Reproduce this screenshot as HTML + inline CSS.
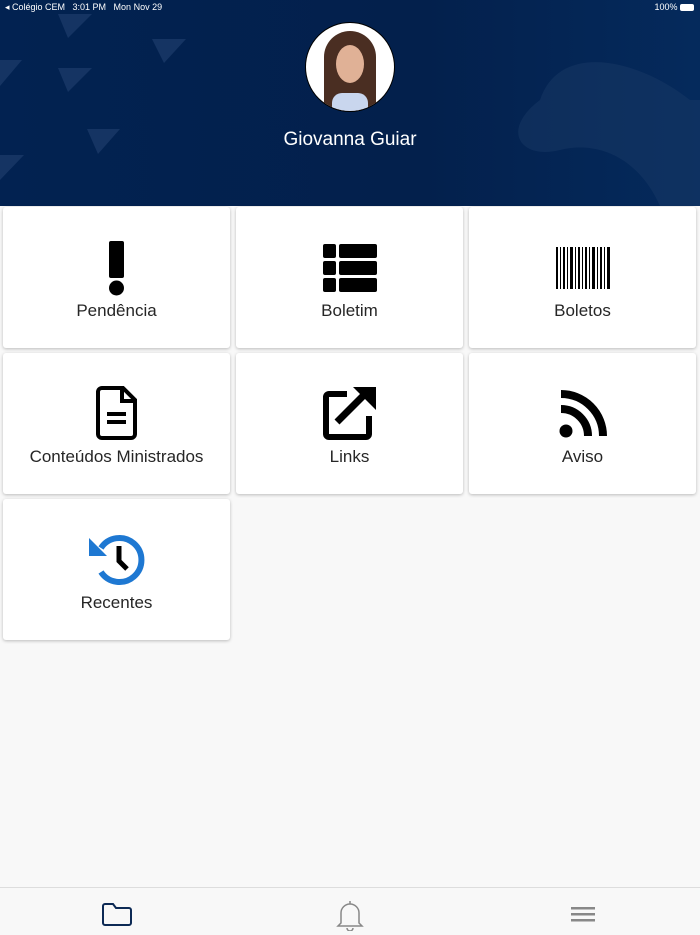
<!DOCTYPE html>
<html><head><meta charset="utf-8"><style>
body{margin:0;width:700px;height:934px;background:#f8f8f8;font-family:"Liberation Sans",Roboto,sans-serif;position:relative;overflow:hidden}
.hdr{position:absolute;left:0;top:0;width:700px;height:206px;background:linear-gradient(90deg,#022251,#03204c 60%,#052a5c);overflow:hidden}
.sb{position:absolute;top:2px;font-size:9px;color:#fff}
.name{position:absolute;top:129px;width:700px;text-align:center;color:#fff;font-size:19px}
.card{position:absolute;width:227px;height:141px;background:#fff;border-radius:3px;box-shadow:0 1px 3px rgba(0,0,0,.25)}
.card svg{position:absolute;left:50%;transform:translateX(-50%);top:34px}
.card .t{position:absolute;top:94px;width:100%;text-align:center;font-size:17px;color:#262626}
.tab{position:absolute;top:887px;left:0;width:700px;height:47px;background:#f8f8f8;border-top:1px solid #ddd}
</style></head><body>
<div class="hdr">
<svg width="700" height="206" style="position:absolute;left:0;top:0">
<g fill="#1b3a68" opacity=".8">
<polygon points="58,14 92,14 68,38"/><polygon points="152,39 186,39 164,63"/><polygon points="0,60 22,60 0,86"/><polygon points="58,68 92,68 68,92"/><polygon points="87,129 120,129 98,154"/><polygon points="0,155 24,155 0,180"/>
<path d="M540,100 C560,40 640,60 690,100 L700,100 L700,206 L660,206 C640,160 600,140 560,150 C520,160 500,130 540,100Z" opacity=".6"/>
</g></svg>
<div class="sb" style="left:5px">◂ Colégio CEM&nbsp;&nbsp;&nbsp;3:01 PM&nbsp;&nbsp;&nbsp;Mon Nov 29</div>
<div class="sb" style="right:6px">100% <span style="display:inline-block;width:14px;height:7px;background:#fff;border-radius:2px;vertical-align:-1px"></span></div>
<div style="position:absolute;left:305px;top:22px;width:88px;height:88px;border-radius:50%;background:#fff;border:1px solid #000;overflow:hidden">
<div style="position:absolute;left:18px;top:8px;width:52px;height:90px;background:#4a2e22;border-radius:26px 26px 10px 10px"></div>
<div style="position:absolute;left:30px;top:22px;width:28px;height:38px;background:#e0b196;border-radius:50%"></div>
<div style="position:absolute;left:26px;top:70px;width:36px;height:30px;background:#c9d6ee;border-radius:10px 10px 0 0"></div>
</div>
</div>
<div class="name">Giovanna Guiar</div>

<div class="card" style="left:3px;top:207px"><svg width="20" height="56" viewBox="0 0 20 56"><rect x="2" y="0" width="15" height="37" rx="2"/><circle cx="9.5" cy="47" r="7.5"/></svg><div class="t">Pendência</div></div>
<div class="card" style="left:236px;top:207px"><svg width="54" height="48" viewBox="0 0 54 48" style="top:37px"><rect x="0" y="0" width="13" height="14" rx="2"/><rect x="16" y="0" width="38" height="14" rx="2"/><rect x="0" y="17" width="13" height="14" rx="2"/><rect x="16" y="17" width="38" height="14" rx="2"/><rect x="0" y="34" width="13" height="14" rx="2"/><rect x="16" y="34" width="38" height="14" rx="2"/></svg><div class="t">Boletim</div></div>
<div class="card" style="left:469px;top:207px"><svg width="54" height="42" viewBox="0 0 54 42" style="top:40px"><g fill="#000"><rect x="0" width="2" height="42"/><rect x="4" width="1" height="42"/><rect x="7" width="2" height="42"/><rect x="11" width="1" height="42"/><rect x="14" width="3" height="42"/><rect x="19" width="1" height="42"/><rect x="22" width="2" height="42"/><rect x="26" width="1" height="42"/><rect x="29" width="2" height="42"/><rect x="33" width="1" height="42"/><rect x="36" width="3" height="42"/><rect x="41" width="1" height="42"/><rect x="44" width="2" height="42"/><rect x="48" width="1" height="42"/><rect x="51" width="3" height="42"/></g></svg><div class="t">Boletos</div></div>

<div class="card" style="left:3px;top:353px"><svg width="42" height="54" viewBox="0 0 42 54" style="top:33px"><path d="M6,2 H27 L39,14 V48 a4,4 0 0 1 -4,4 H6 a4,4 0 0 1 -4,-4 V6 a4,4 0 0 1 4,-4Z" fill="none" stroke="#000" stroke-width="4"/><path d="M26,2 V15 H39" fill="none" stroke="#000" stroke-width="4"/><rect x="11" y="26" width="19" height="4"/><rect x="11" y="34" width="19" height="4"/></svg><div class="t">Conteúdos Ministrados</div></div>
<div class="card" style="left:236px;top:353px"><svg width="54" height="54" viewBox="0 0 54 54" style="top:33px"><path d="M24,8 H6 a3,3 0 0 0 -3,3 V48 a3,3 0 0 0 3,3 H43 a3,3 0 0 0 3,-3 V30" fill="none" stroke="#000" stroke-width="6"/><path d="M14,36 L44,6" stroke="#000" stroke-width="7"/><polygon points="30,1 53,1 53,24"/></svg><div class="t">Links</div></div>
<div class="card" style="left:469px;top:353px"><svg width="48" height="48" viewBox="0 0 48 48" style="top:37px"><circle cx="7" cy="41" r="6.5"/><path d="M2,19 A27,27 0 0 1 29,46" fill="none" stroke="#000" stroke-width="8"/><path d="M2,4 A42,42 0 0 1 44,46" fill="none" stroke="#000" stroke-width="8"/></svg><div class="t">Aviso</div></div>

<div class="card" style="left:3px;top:499px"><svg width="56" height="54" viewBox="0 0 56 54" style="top:33px"><path d="M12,16 A22,22 0 1 1 12,40" fill="none" stroke="#1e78d2" stroke-width="6"/><polygon points="0,6 0,24 18,24" fill="#1e78d2"/><path d="M30,14 V29 L38,37" fill="none" stroke="#000" stroke-width="5"/></svg><div class="t">Recentes</div></div>

<div class="tab">
<svg width="32" height="24" style="position:absolute;left:101px;top:15px" viewBox="0 0 32 24"><path d="M2,3 a2,2 0 0 1 2,-2 H12 L15,5 H28 a2,2 0 0 1 2,2 V20 a2,2 0 0 1 -2,2 H4 a2,2 0 0 1 -2,-2Z" fill="none" stroke="#0d2a55" stroke-width="2"/></svg>
<svg width="30" height="32" style="position:absolute;left:335px;top:11px" viewBox="0 0 30 32"><path d="M15,2 V5 M6,24 V14 a9,9 0 0 1 18,0 V24 L27,27 H3Z M12,29 a3,3 0 0 0 6,0" fill="none" stroke="#888" stroke-width="1.5"/></svg>
<svg width="24" height="16" style="position:absolute;left:571px;top:19px"><g fill="#888"><rect y="0" width="24" height="2.5"/><rect y="6" width="24" height="2.5"/><rect y="12" width="24" height="2.5"/></g></svg>
</div>
</body></html>
